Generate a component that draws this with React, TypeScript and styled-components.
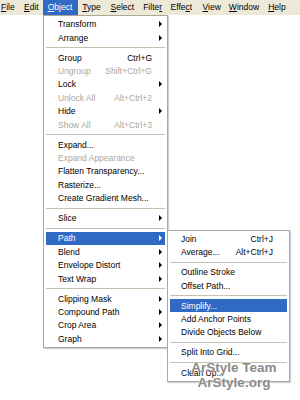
import styled, { createGlobalStyle } from "styled-components";

const GlobalStyle = createGlobalStyle`
  html, body {
    margin: 0;
    padding: 0;
    background: #ffffff;
  }
  body {
    width: 300px;
    height: 400px;
    overflow: hidden;
    font-family: "Liberation Sans", Arial, sans-serif;
  }
`;

const Screen = styled.div`
  position: relative;
  width: 300px;
  height: 400px;
  background: #ffffff;
`;

const MenuBar = styled.div`
  display: flex;
  height: 15px;
  margin-left: -3.5px;
  background: #ece9d8;
  font-size: 8.5px;
`;

const MenuTitle = styled.div<{ $w: number; $open?: boolean }>`
  position: relative;
  width: ${(p) => p.$w}px;
  flex: none;
  padding-left: 4.5px;
  box-sizing: border-box;
  line-height: 15px;
  color: ${(p) => (p.$open ? "#ffffff" : "#000000")};
  background: ${(p) => (p.$open ? "#316ac5" : "transparent")};

  u {
    text-decoration: underline;
    text-underline-offset: 1px;
  }
`;

const Menu = styled.div<{ $left: number; $top: number; $w: number }>`
  position: absolute;
  left: ${(p) => p.$left}px;
  top: ${(p) => p.$top}px;
  width: ${(p) => p.$w}px;
  box-sizing: border-box;
  padding: 1.5px 2px;
  background: #ffffff;
  border: 1px solid #aca899;
  box-shadow: 1px 1px 1px rgba(0, 0, 0, 0.18);
  display: flex;
  flex-direction: column;
  font-size: 8.5px;
  z-index: 2;
`;

const Item = styled.div<{ $active?: boolean; $disabled?: boolean; $pad: number }>`
  display: flex;
  align-items: center;
  height: 13.4px;
  padding-left: ${(p) => p.$pad}px;
  white-space: nowrap;
  color: ${(p) =>
    p.$active ? "#ffffff" : p.$disabled ? "#aca899" : "#000000"};
  background: ${(p) => (p.$active ? "#316ac5" : "transparent")};
`;

const Label = styled.span`
  flex: 1;
`;

const Shortcut = styled.span`
  flex: none;
`;

const ArrowCell = styled.span<{ $w: number }>`
  flex: none;
  width: ${(p) => p.$w}px;
  display: flex;
  justify-content: flex-end;
  padding-right: 3px;
  box-sizing: border-box;
`;

const Triangle = styled.span<{ $active?: boolean }>`
  width: 0;
  height: 0;
  border-top: 3px solid transparent;
  border-bottom: 3px solid transparent;
  border-left: 3px solid ${(p) => (p.$active ? "#ffffff" : "#000000")};
`;

const Separator = styled.div`
  height: 6.7px;
  display: flex;
  align-items: center;

  &::after {
    content: "";
    flex: 1;
    height: 1px;
    background: #c5c2b2;
  }
`;

const Watermark = styled.div`
  position: absolute;
  left: 186px;
  top: 361px;
  width: 96px;
  text-align: center;
  font-family: "Liberation Sans", Arial, sans-serif;
  font-weight: bold;
  font-size: 13.5px;
  line-height: 14.5px;
  color: #8a8a8a;
  text-shadow: 0 0 1px #ffffff, 0 0 1px #ffffff;
  z-index: 3;
`;

type Entry =
  | "sep"
  | {
      label: string;
      shortcut?: string;
      sub?: boolean;
      disabled?: boolean;
      active?: boolean;
    };

const objectMenu: Entry[] = [
  { label: "Transform", sub: true },
  { label: "Arrange", sub: true },
  "sep",
  { label: "Group", shortcut: "Ctrl+G" },
  { label: "Ungroup", shortcut: "Shift+Ctrl+G", disabled: true },
  { label: "Lock", sub: true },
  { label: "Unlock All", shortcut: "Alt+Ctrl+2", disabled: true },
  { label: "Hide", sub: true },
  { label: "Show All", shortcut: "Alt+Ctrl+3", disabled: true },
  "sep",
  { label: "Expand..." },
  { label: "Expand Appearance", disabled: true },
  { label: "Flatten Transparency..." },
  { label: "Rasterize..." },
  { label: "Create Gradient Mesh..." },
  "sep",
  { label: "Slice", sub: true },
  "sep",
  { label: "Path", sub: true, active: true },
  { label: "Blend", sub: true },
  { label: "Envelope Distort", sub: true },
  { label: "Text Wrap", sub: true },
  "sep",
  { label: "Clipping Mask", sub: true },
  { label: "Compound Path", sub: true },
  { label: "Crop Area", sub: true },
  { label: "Graph", sub: true },
];

const pathMenu: Entry[] = [
  { label: "Join", shortcut: "Ctrl+J" },
  { label: "Average...", shortcut: "Alt+Ctrl+J" },
  "sep",
  { label: "Outline Stroke" },
  { label: "Offset Path..." },
  "sep",
  { label: "Simplify...", active: true },
  { label: "Add Anchor Points" },
  { label: "Divide Objects Below" },
  "sep",
  { label: "Split Into Grid..." },
  "sep",
  { label: "Clean Up..." },
];

const MenuList = ({ entries, pad, arrowW }: { entries: Entry[]; pad: number; arrowW: number }) => (
  <>
    {entries.map((e, i) =>
      e === "sep" ? (
        <Separator key={i} />
      ) : (
        <Item key={i} $pad={pad} $active={e.active} $disabled={e.disabled}>
          <Label>{e.label}</Label>
          {e.shortcut && <Shortcut>{e.shortcut}</Shortcut>}
          <ArrowCell $w={arrowW}>{e.sub && <Triangle $active={e.active} />}</ArrowCell>
        </Item>
      )
    )}
  </>
);

const titles: { text: string; u: number; w: number; open?: boolean }[] = [
  { text: "File", u: 0, w: 23 },
  { text: "Edit", u: 0, w: 23.7 },
  { text: "Object", u: 0, w: 34.5, open: true },
  { text: "Type", u: 0, w: 28.4 },
  { text: "Select", u: 0, w: 32.6 },
  { text: "Filter", u: 5, w: 27.4 },
  { text: "Effect", u: 4, w: 32 },
  { text: "View", u: 0, w: 26.3 },
  { text: "Window", u: 0, w: 39.3 },
  { text: "Help", u: 0, w: 25 },
];

export default function App() {
  return (
    <>
      <GlobalStyle />
      <Screen>
        <MenuBar>
          {titles.map((t) => (
            <MenuTitle key={t.text} $w={t.w} $open={t.open}>
              {t.text.slice(0, t.u)}
              <u>{t.text[t.u]}</u>
              {t.text.slice(t.u + 1)}
            </MenuTitle>
          ))}
        </MenuBar>

        <Menu $left={43} $top={15} $w={125}>
          <MenuList entries={objectMenu} pad={12} arrowW={13} />
        </Menu>

        <Menu $left={167} $top={229.5} $w={123}>
          <MenuList entries={pathMenu} pad={11} arrowW={14} />
        </Menu>

        <Watermark>
          ArStyle Team
          <br />
          ArStyle.org
        </Watermark>
      </Screen>
    </>
  );
}
